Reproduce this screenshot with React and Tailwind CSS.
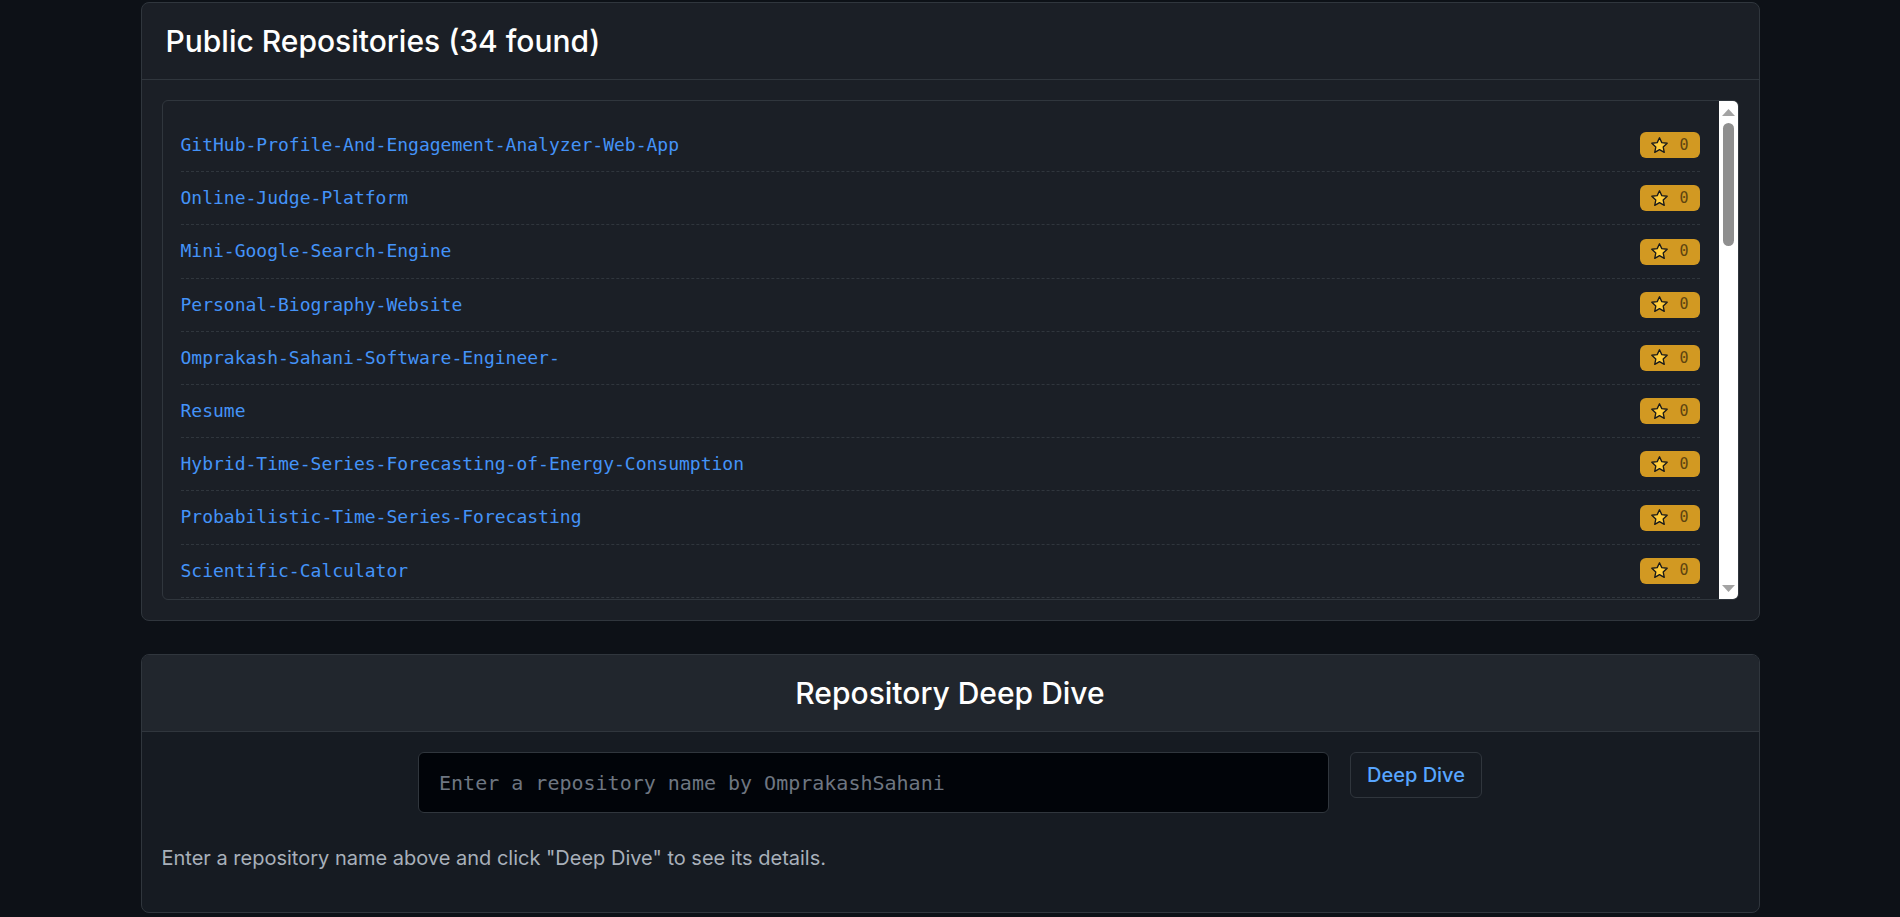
import React from 'react';

const REPOS = [
    'GitHub-Profile-And-Engagement-Analyzer-Web-App',
    'Online-Judge-Platform',
    'Mini-Google-Search-Engine',
    'Personal-Biography-Website',
    'Omprakash-Sahani-Software-Engineer-',
    'Resume',
    'Hybrid-Time-Series-Forecasting-of-Energy-Consumption',
    'Probabilistic-Time-Series-Forecasting',
    'Scientific-Calculator',
    'Weather-App',
    'Todo-List-React',
    'Portfolio',
    'Chat-Application',
    'Expense-Tracker',
    'Library-Management-System',
    'Stock-Price-Prediction',
    'Sorting-Visualizer',
    'Pathfinding-Visualizer',
    'Tic-Tac-Toe',
    'Snake-Game',
    'Quiz-App',
    'Movie-Recommendation-System',
    'Sentiment-Analysis',
    'Image-Classifier-CNN',
    'Data-Structures-And-Algorithms',
    'LeetCode-Solutions',
    'E-Commerce-Website',
    'Blog-Platform',
    'URL-Shortener',
    'Password-Generator',
    'Calculator-JS',
    'Notes-App',
    'Hospital-Management-System',
    'OmprakashSahani',
];

const MONO = "font-['DejaVu_Sans_Mono','Liberation_Mono',monospace]";
const SANS = "font-['Inter','Noto_Sans',sans-serif]";

const Star = () => (
    <svg width="19" height="19" viewBox="0 0 24 24" className="shrink-0">
        <path
            d="M12 2.2l2.9 6.2 6.8.8-5 4.7 1.3 6.7L12 17.3l-6 3.3 1.3-6.7-5-4.7 6.8-.8z"
            fill="#ffcc3d"
            stroke="#1a1a1a"
            strokeWidth="1.7"
            strokeLinejoin="round"
        />
    </svg>
);

// classic light scrollbar drawn beside the list (real one is hidden)
const ScrollTrack = () => (
    <div className="flex w-[19px] shrink-0 flex-col items-center bg-white pt-2 pb-[7px]">
        <svg width="13" height="7" viewBox="0 0 13 7">
            <polygon points="6.5,0 13,7 0,7" fill="#a3a3a3" />
        </svg>
        <div className="mt-[7px] h-[123px] w-[11px] rounded-full bg-[#8f8f8f]" />
        <div className="flex-1" />
        <svg width="13" height="7" viewBox="0 0 13 7">
            <polygon points="0,0 13,0 6.5,7" fill="#a3a3a3" />
        </svg>
    </div>
);

export default function App() {
    return (
        <div className={`min-h-screen bg-[#0d1117] pt-[2px] ${SANS}`}>
            {/* ── Public repositories ─────────────────────────── */}
            <section className="mx-auto w-[1619px] rounded-lg border border-[#30363d] bg-[#1b1f26]">
                <div className="border-b border-[#30363d] px-6 py-[20px]">
                    <h2 className="text-[30px] leading-9 font-medium text-white">Public Repositories (34 found)</h2>
                </div>
                <div className="p-5">
                    <div className="flex h-[500px] overflow-hidden rounded-md border border-[#30363d]">
                        <ul className="flex-1 overflow-y-auto py-[18px] pr-[19px] pl-[18px] [scrollbar-width:none]">
                            {REPOS.map((name) => (
                                <li
                                    key={name}
                                    className="flex items-center justify-between border-b border-dashed border-[#30363d] py-[13px]"
                                >
                                    <span className={`${MONO} text-[18px] leading-[26.2px] text-[#4493f8]`}>{name}</span>
                                    <span className="flex h-[26px] w-[60px] items-center gap-[11px] rounded-md bg-[#d29922] pl-[10px]">
                                        <Star />
                                        <span className={`${MONO} text-[15px] text-[#5e4410]`}>0</span>
                                    </span>
                                </li>
                            ))}
                        </ul>
                        <ScrollTrack />
                    </div>
                </div>
            </section>

            {/* ── Repository deep dive ────────────────────────── */}
            <section className="mx-auto mt-[33px] w-[1619px] overflow-hidden rounded-lg border border-[#30363d] bg-[#161b22]">
                <div className="border-b border-[#30363d] bg-[#21262d] py-[20px] text-center">
                    <h2 className="text-[30px] leading-9 font-medium text-white">Repository Deep Dive</h2>
                </div>
                <div className="px-5 pt-5 pb-5">
                    <div className="flex items-start justify-center gap-[21px]">
                        <input
                            type="text"
                            placeholder="Enter a repository name by OmprakashSahani"
                            className={`${MONO} h-[61px] w-[911px] rounded-md border border-[#30363d] bg-[#010409] px-5 text-[20px] text-[#c9d1d9] placeholder:text-[#6e7681] outline-none`}
                        />
                        <button className="h-[46px] rounded-md border border-[#30363d] px-4 text-[20px] font-medium text-[#58a6ff]">
                            Deep Dive
                        </button>
                    </div>
                    <p className="mt-[31px] mb-5 text-[20px] leading-[28px] text-[#a8b0ba]">
                        Enter a repository name above and click "Deep Dive" to see its details.
                    </p>
                </div>
            </section>
        </div>
    );
}
